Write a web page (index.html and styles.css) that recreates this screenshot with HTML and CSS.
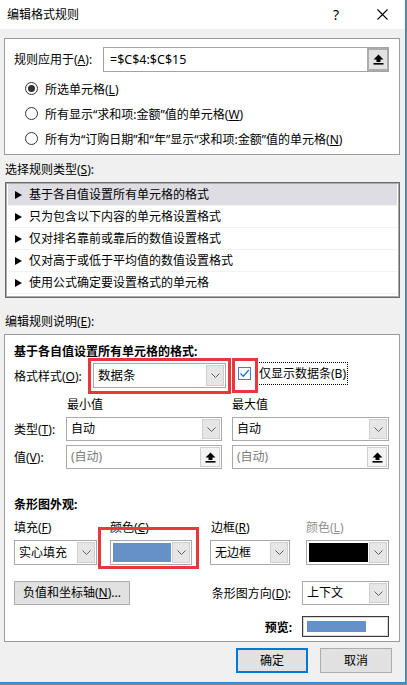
FILE: index.html
```html
<!DOCTYPE html>
<html>
<head>
<meta charset="utf-8">
<link rel="stylesheet" href="styles.css">
</head>
<body>
<div class="window">
  <div class="titlebar">
    <span class="title">编辑格式规则</span>
    <span class="help">?</span>
    <span class="close"><svg width="11" height="11" viewBox="0 0 11 11"><path d="M0.5 0.5 L10.5 10.5 M10.5 0.5 L0.5 10.5" stroke="#000" stroke-width="1.1" fill="none"/></svg></span>
  </div>
  <div class="client">
    <div class="group g1">
      <div class="applies">
        <span class="lbl-applies">规则应用于(<u>A</u>):</span>
        <div class="refbox">
          <span class="reftext">=$C$4:$C$15</span>
          <span class="upbtn big"><svg width="11" height="11" viewBox="0 0 11 11"><path d="M5.5 0.5 L10.5 5.5 L7.5 5.5 L7.5 8 L3.5 8 L3.5 5.5 L0.5 5.5 Z" fill="#000"/><rect x="0.5" y="9" width="10" height="1.6" fill="#000"/></svg></span>
        </div>
      </div>
      <div class="radio-row first"><span class="radio on"></span><span>所选单元格(<u>L</u>)</span></div>
      <div class="radio-row"><span class="radio"></span><span>所有显示“求和项:金额”值的单元格(<u>W</u>)</span></div>
      <div class="radio-row"><span class="radio"></span><span>所有为“订购日期”和“年”显示“求和项:金额”值的单元格(<u>N</u>)</span></div>
    </div>

    <div class="section-label">选择规则类型(<u>S</u>):</div>
    <div class="listbox">
      <div class="item sel"><span class="tri"></span>基于各自值设置所有单元格的格式</div>
      <div class="item"><span class="tri"></span>只为包含以下内容的单元格设置格式</div>
      <div class="item"><span class="tri"></span>仅对排名靠前或靠后的数值设置格式</div>
      <div class="item"><span class="tri"></span>仅对高于或低于平均值的数值设置格式</div>
      <div class="item"><span class="tri"></span>使用公式确定要设置格式的单元格</div>
    </div>

    <div class="section-label l2">编辑规则说明(<u>E</u>):</div>
    <div class="group g2">
      <div class="heading">基于各自值设置所有单元格的格式:</div>
      <div class="row-style">
        <span class="lbl-style">格式样式(<u>O</u>):</span>
        <div class="combo c-style"><span class="ctext">数据条</span><span class="cbtn"><svg width="9" height="5" viewBox="0 0 9 5"><path d="M0.5 0.5 L4.5 4.5 L8.5 0.5" stroke="#606060" fill="none"/></svg></span></div>
        <div class="cbwrap">
          <span class="checkbox"><svg width="11" height="11" viewBox="0 0 11 11"><path d="M1.5 5.5 L4.3 8.3 L9.8 2" stroke="#1c74d4" stroke-width="1.3" fill="none"/></svg></span>
          <span class="cblabel">仅显示数据条(B)</span>
        </div>
      </div>
      <div class="row-minmax">
        <span class="mm-min">最小值</span>
        <span class="mm-max">最大值</span>
      </div>
      <div class="row-type">
        <span class="lbl-type">类型(<u>T</u>):</span>
        <div class="combo c-half"><span class="ctext">自动</span><span class="cbtn"><svg width="9" height="5" viewBox="0 0 9 5"><path d="M0.5 0.5 L4.5 4.5 L8.5 0.5" stroke="#606060" fill="none"/></svg></span></div>
        <div class="combo c-half c-right"><span class="ctext">自动</span><span class="cbtn"><svg width="9" height="5" viewBox="0 0 9 5"><path d="M0.5 0.5 L4.5 4.5 L8.5 0.5" stroke="#606060" fill="none"/></svg></span></div>
      </div>
      <div class="row-value">
        <span class="lbl-type">值(<u>V</u>):</span>
        <div class="vinput c-half"><span class="ctext ph">(自动)</span><span class="upbtn"><svg width="11" height="11" viewBox="0 0 11 11"><path d="M5.5 0.5 L10.5 5.5 L7.5 5.5 L7.5 8 L3.5 8 L3.5 5.5 L0.5 5.5 Z" fill="#000"/><rect x="0.5" y="9" width="10" height="1.6" fill="#000"/></svg></span></div>
        <div class="vinput c-half c-right"><span class="ctext ph">(自动)</span><span class="upbtn"><svg width="11" height="11" viewBox="0 0 11 11"><path d="M5.5 0.5 L10.5 5.5 L7.5 5.5 L7.5 8 L3.5 8 L3.5 5.5 L0.5 5.5 Z" fill="#000"/><rect x="0.5" y="9" width="10" height="1.6" fill="#000"/></svg></span></div>
      </div>
      <div class="heading h2">条形图外观:</div>
      <div class="row-barlabels">
        <span class="bl bl1">填充(<u>F</u>)</span>
        <span class="bl bl2">颜色(<u>C</u>)</span>
        <span class="bl bl3">边框(<u>R</u>)</span>
        <span class="bl bl4 dis">颜色(<u>L</u>)</span>
      </div>
      <div class="row-bar">
        <div class="combo b-fill"><span class="ctext">实心填充</span><span class="cbtn"><svg width="9" height="5" viewBox="0 0 9 5"><path d="M0.5 0.5 L4.5 4.5 L8.5 0.5" stroke="#606060" fill="none"/></svg></span></div>
        <div class="combo b-color"><span class="swatch blue"></span><span class="cbtn"><svg width="9" height="5" viewBox="0 0 9 5"><path d="M0.5 0.5 L4.5 4.5 L8.5 0.5" stroke="#606060" fill="none"/></svg></span></div>
        <div class="combo b-border"><span class="ctext">无边框</span><span class="cbtn"><svg width="9" height="5" viewBox="0 0 9 5"><path d="M0.5 0.5 L4.5 4.5 L8.5 0.5" stroke="#606060" fill="none"/></svg></span></div>
        <div class="combo b-color2"><span class="swatch black"></span><span class="cbtn"><svg width="9" height="5" viewBox="0 0 9 5"><path d="M0.5 0.5 L4.5 4.5 L8.5 0.5" stroke="#606060" fill="none"/></svg></span></div>
      </div>
      <div class="row-axis">
        <span class="btn axis-btn">负值和坐标轴(<u>N</u>)...</span>
        <span class="lbl-dir">条形图方向(<u>D</u>):</span>
        <div class="combo c-dir"><span class="ctext">上下文</span><span class="cbtn"><svg width="9" height="5" viewBox="0 0 9 5"><path d="M0.5 0.5 L4.5 4.5 L8.5 0.5" stroke="#606060" fill="none"/></svg></span></div>
      </div>
      <div class="row-preview">
        <span class="lbl-preview">预览:</span>
        <div class="preview"><span class="pbar"></span></div>
      </div>

      <span class="mark mark-style"></span>
      <span class="mark mark-check"></span>
      <span class="mark mark-color"></span>
    </div>

    <div class="buttons">
      <span class="btn ok">确定</span>
      <span class="btn cancel">取消</span>
    </div>
  </div>
</div>
</body>
</html>
```

FILE: styles.css
```css
* { box-sizing: border-box; }
html, body { margin: 0; padding: 0; }
body {
  width: 407px;
  height: 685px;
  overflow: hidden;
  background: #7d8590;
  font-family: "Noto Sans", "Noto Sans CJK SC", sans-serif;
  font-size: 12px;
  color: #000;
  white-space: nowrap;
}
u { text-decoration: underline; text-underline-offset: 1px; }

.window {
  width: 406px;
  height: 683px;
  background: #f0f0f0;
  border-right: 1px solid #2b88d8;
  border-bottom: 1px solid #2b88d8;
  display: flex;
  flex-direction: column;
}

.titlebar {
  height: 29px;
  background: #fff;
  display: flex;
  align-items: center;
  flex-shrink: 0;
}
.title { margin-left: 7px; font-size: 12px; line-height: 16px; flex: 1; }
.help { width: 10px; font-size: 14px; line-height: 16px; margin-right: 34px; }
.close { width: 11px; height: 11px; margin-right: 17px; display: flex; }

.client { display: flex; flex-direction: column; }

.group {
  margin-left: 4px;
  width: 396px;
  border: 1px solid #9c9c9c;
  background: #fff;
}
.g1 { margin-top: 9px; padding: 8px 10px 3px 9px; }
.applies { display: flex; align-items: center; height: 25px; }
.lbl-applies { width: 89px; line-height: 16px; }
.refbox {
  width: 286px;
  height: 25px;
  border: 1px solid #a3a3a3;
  display: flex;
  align-items: center;
  background: #fff;
}
.reftext { flex: 1; padding-left: 6px; font-size: 12.5px; line-height: 16px; }
.upbtn {
  width: 20px;
  height: 100%;
  display: flex;
  align-items: center;
  justify-content: center;
  background: #f4f4f4;
  border: 1px solid #cfcfcf;
}
.upbtn.big { background: #e3e3e3; border: 2px solid #acacac; border-right-width: 1px; width: 21px; }

.radio-row { display: flex; align-items: center; height: 25px; padding-left: 11px; }
.radio-row.first { margin-top: 4px; }
.radio {
  width: 13px;
  height: 13px;
  border: 1px solid #333;
  border-radius: 50%;
  margin-right: 7px;
  display: flex;
  align-items: center;
  justify-content: center;
  background: #fff;
}
.radio.on::after {
  content: "";
  width: 7px;
  height: 7px;
  border-radius: 50%;
  background: #333;
}

.section-label { margin-top: 5px; margin-left: 5px; height: 20px; line-height: 20px; margin-bottom: 2px; }
.section-label.l2 { margin-top: 14px; }

.listbox {
  margin-left: 5px;
  width: 395px;
  height: 116px;
  border: 1px solid #6c6c6c;
  box-shadow: inset 0 0 0 1px #a9a9a9;
  background: #fff;
  padding: 1px 2px 2px 2px;
}
.item {
  height: 22px;
  display: flex;
  align-items: center;
  border-bottom: 1px solid #f2f2f2;
  line-height: 16px;
}
.item.sel { background: #dddde3; }
.tri {
  width: 0; height: 0;
  border-top: 4px solid transparent;
  border-bottom: 4px solid transparent;
  border-left: 7px solid #000;
  margin-left: 7px;
  margin-right: 7px;
}

.g2 {
  margin-top: 0;
  padding: 7px 10px 4px 9px;
  position: relative;
  display: flex;
  flex-direction: column;
}
.heading { height: 20px; line-height: 20px; font-weight: bold; }
.heading.h2 { margin-top: 27px; height: 18px; line-height: 18px; }

.combo, .vinput {
  border: 1px solid #a9a9a9;
  background: #fff;
  display: flex;
  align-items: stretch;
  padding: 1px;
}
.ctext { flex: 1; display: flex; align-items: center; padding-left: 3px; line-height: 16px; overflow: hidden; }
.ctext.ph { color: #7a7a7a; }
.cbtn {
  width: 18px;
  background: #e6e6e6;
  border: 1px solid #d0d0d0;
  display: flex;
  align-items: center;
  justify-content: center;
}
.vinput .upbtn { height: auto; width: 20px; }

.row-style { display: flex; align-items: center; height: 25px; margin-top: 1px; }
.lbl-style { width: 79px; }
.c-style { width: 133px; height: 25px; }
.c-style .ctext { padding-left: 3px; font-size: 12.5px; }
.cbwrap { display: flex; align-items: center; height: 23px; margin-left: 12px; align-self: flex-start; margin-top: -1px; }
.checkbox {
  width: 13px;
  height: 13px;
  border: 1px solid #3c7fd6;
  background: #fff;
  display: flex;
  align-items: center;
  justify-content: center;
}
.cblabel {
  margin-left: 6px;
  border: 1px dotted #000;
  height: 23px;
  line-height: 21px;
  padding: 0 1px;
}

.row-minmax { display: flex; margin-top: 8px; height: 18px; line-height: 18px; }
.mm-min { margin-left: 53px; width: 165px; }

.row-type, .row-value { display: flex; align-items: center; height: 24px; margin-top: 3px; }
.row-value { margin-top: 4px; }
.lbl-type { width: 52px; }
.c-half { width: 156px; height: 24px; }
.c-right { width: 157px; margin-left: 10px; }
.c-half .ctext { padding-left: 3px; }

.row-barlabels { display: flex; margin-top: 5px; height: 18px; line-height: 18px; }
.bl1 { width: 96px; }
.bl2 { width: 101px; }
.bl3 { width: 95px; }
.dis { color: #8f8f8f; }

.row-bar { display: flex; margin-top: 3px; height: 25px; }
.b-fill { width: 83px; }
.b-color { width: 82px; margin-left: 13px; }
.b-border { width: 80px; margin-left: 18px; }
.b-color2 { width: 83px; margin-left: 16px; }
.swatch { flex: 1; border: 1px solid #fff; }
.swatch.blue { background: #6590c8; }
.swatch.black { background: #000; }

.row-axis { display: flex; align-items: center; margin-top: 16px; height: 24px; }
.btn {
  background: #e1e1e1;
  border: 1px solid #adadad;
  display: flex;
  align-items: center;
  justify-content: center;
  line-height: 16px;
}
.axis-btn { width: 116px; height: 24px; }
.lbl-dir { margin-left: auto; margin-right: 11px; }
.c-dir { width: 87px; height: 24px; }

.row-preview { display: flex; align-items: center; justify-content: flex-end; margin-top: 11px; height: 21px; }
.lbl-preview { font-weight: bold; margin-right: 10px; }
.preview {
  width: 87px;
  height: 21px;
  border: 1px solid #3a3a3a;
  box-shadow: inset 0 0 0 1px #d8d8d8;
  background: #fff;
  padding: 4px 22px 4px 4px;
  display: flex;
}
.pbar { flex: 1; background: #6590c8; }

.mark {
  position: absolute;
  border: 3px solid #e8383d;
}
.mark-style { left: 83px; top: 23px; width: 143px; height: 36px; }
.mark-check { left: 227px; top: 23px; width: 26px; height: 35px; }
.mark-color { left: 93px; top: 192px; width: 101px; height: 42px; }

.buttons { display: flex; justify-content: flex-end; margin-top: 6px; padding-right: 13px; }
.buttons .btn { width: 72px; height: 25px; }
.btn.ok { border: 2px solid #0078d7; margin-right: 12px; }
```
